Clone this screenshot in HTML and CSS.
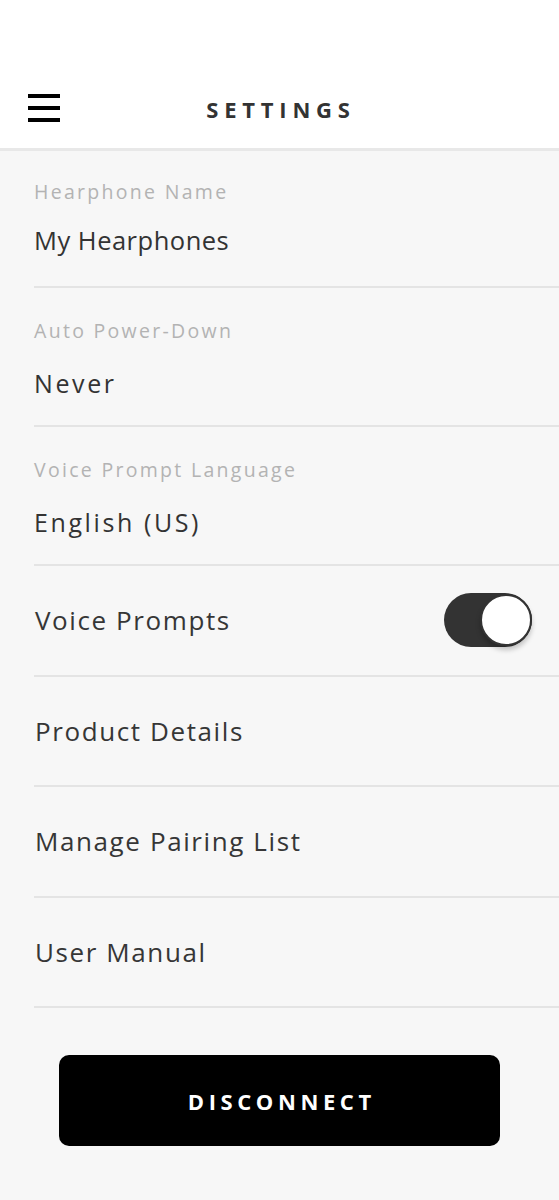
FILE: index.html
```html
<!DOCTYPE html>
<html lang="en">
  <head>
    <meta charset="UTF-8" />
    <meta name="viewport" content="width=device-width, initial-scale=1.0" />
    <title>Settings</title>
    <link rel="stylesheet" href="styles.css">
  </head>
  <body>
    <header class="topbar">
      <button class="menu" aria-label="Menu">
        <span></span>
        <span></span>
        <span></span>
      </button>
      <h1 class="title">SETTINGS</h1>
    </header>

    <main class="settings">
      <div class="field first">
        <div class="field-label">Hearphone Name</div>
        <div class="field-value plain">My Hearphones</div>
      </div>
      <div class="field">
        <div class="field-label">Auto Power-Down</div>
        <div class="field-value">Never</div>
      </div>
      <div class="field">
        <div class="field-label">Voice Prompt Language</div>
        <div class="field-value">English (US)</div>
      </div>
      <div class="row">
        <span>Voice Prompts</span>
        <label class="switch">
          <input type="checkbox" checked />
          <span class="knob"></span>
        </label>
      </div>
      <div class="row"><span>Product Details</span></div>
      <div class="row"><span>Manage Pairing List</span></div>
      <div class="row"><span>User Manual</span></div>

      <div class="actions">
        <button class="disconnect">DISCONNECT</button>
      </div>
    </main>
  </body>
</html>
```

FILE: styles.css
```css
body {
  margin: 0;
  background-color: #f7f7f7;
  font-family: "Open Sans", Lato, sans-serif;
  color: #333;
}

.topbar {
  position: relative;
  height: 151px;
  background-color: #fff;
  border-bottom: 3px solid #e8e8e8;
  display: flex;
  align-items: flex-end;
  justify-content: center;
  padding-bottom: 25px;
  box-sizing: border-box;
}

.menu {
  position: absolute;
  left: 28px;
  top: 94px;
  width: 32px;
  height: 28px;
  padding: 0;
  border: none;
  background: none;
  display: flex;
  flex-direction: column;
  justify-content: space-between;
}

.menu span {
  display: block;
  height: 4px;
  background-color: #000;
}

.title {
  margin: 0 0 0 3px;
  font-size: 22px;
  font-weight: 700;
  letter-spacing: 5.8px;
  line-height: 28px;
  color: #333;
}

.field {
  margin-left: 34px;
  padding: 31px 0 27px;
  border-bottom: 2px solid #e4e4e4;
}

.field.first {
  padding-top: 29px;
  padding-bottom: 31px;
}

.field-label {
  font-size: 19.5px;
  line-height: 24px;
  letter-spacing: 2.3px;
  color: #b3b3b3;
}

.field-value {
  margin-top: 25px;
  font-size: 25px;
  line-height: 30px;
  letter-spacing: 2.6px;
  color: #333;
}

.field-value.plain {
  margin-top: 21px;
  font-size: 25.5px;
  letter-spacing: 0.5px;
}

.row {
  margin-left: 34px;
  height: 110.5px;
  border-bottom: 2px solid #e4e4e4;
  display: flex;
  align-items: center;
  justify-content: space-between;
  padding-right: 27px;
  font-size: 26px;
  letter-spacing: 1.6px;
  color: #363636;
  box-sizing: border-box;
}

.row span {
  padding-left: 1px;
}

.switch {
  position: relative;
  width: 88px;
  height: 54px;
  display: block;
}

.switch input {
  display: none;
}

.switch .knob {
  position: absolute;
  inset: 0;
  background-color: #333;
  border-radius: 27px;
}

.switch .knob::after {
  content: "";
  position: absolute;
  right: 0;
  top: 1px;
  width: 48px;
  height: 48px;
  border: 2px solid #333;
  border-radius: 50%;
  background-color: #fff;
  box-shadow: 0 4px 5px rgba(0, 0, 0, 0.22);
}

.actions {
  padding: 47px 59px 0 59px;
}

.disconnect {
  width: 100%;
  height: 91px;
  border: none;
  border-radius: 10px;
  background-color: #000;
  color: #fff;
  font-family: "Open Sans", Lato, sans-serif;
  font-size: 22px;
  font-weight: 700;
  letter-spacing: 4.6px;
  text-indent: 4.6px;
}
```
